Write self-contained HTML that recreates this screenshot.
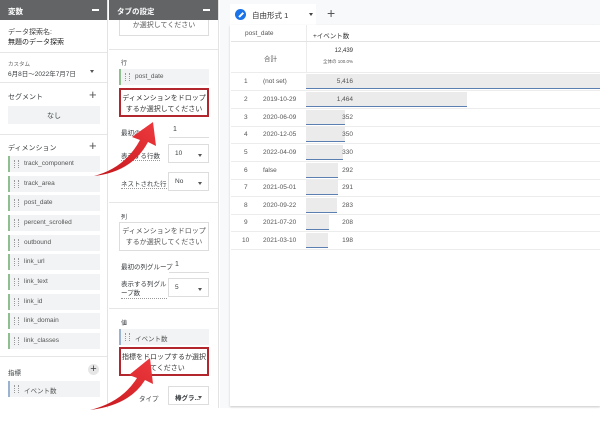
<!DOCTYPE html>
<html><head><meta charset="utf-8"><style>
*{box-sizing:border-box;margin:0;padding:0}
body{width:600px;height:422px;overflow:hidden;background:#fff;font-family:"Liberation Sans","Noto Sans CJK JP",sans-serif;color:#3c4043;position:relative;font-size:7px}
.a{position:absolute}
.hdr{background:#626466;color:#fff;height:20px;font-size:7.5px;padding:6px 8px;font-weight:bold}
.hdr .m{position:absolute;right:8px;top:9px;width:7px;height:1.5px;background:#fff}
.sep{position:absolute;left:0;right:0;height:1px;background:#e6e6e6}
.item{position:absolute;left:8px;width:92px;height:16px;background:#f1f3f4;border-left:2px solid #8fbf8f;font-size:6.5px;color:#555;padding:4px 0 0 14px}
.item:before{content:"";position:absolute;left:4px;top:4px;width:3px;height:8px;border-left:1px dotted #999;border-right:1px dotted #999}
.box{position:absolute;border:1px solid #ddd;background:#fff;text-align:center;font-size:7px;color:#555;line-height:11px}
.red{border:2px solid #b3262e}
.sel{position:absolute;border:1px solid #ddd;background:#fff;font-size:6.5px;padding:5px 0 0 6px}
.sel:after{content:"";position:absolute;right:6px;top:9px;border:2.5px solid transparent;border-top:3px solid #555}
.row{position:absolute;left:231px;width:369px;height:18px;border-bottom:1px solid #ececec;font-size:6.5px;color:#555}
.row .n{position:absolute;right:247px;top:5px}
.bar{position:absolute;left:306px;height:15px;background:#ebebeb;border-bottom:1.5px solid #5b7fb0}
</style></head><body>
<div class="a" style="left:0;top:0;width:108px;height:408px;background:#fff;border-right:1px solid #e3e3e3">
 <div class="hdr">変数<div class="m"></div></div>
 <div class="a" style="left:8px;top:28px;font-size:7px;line-height:10px;color:#444">データ探索名:<br><span style="color:#222">無題のデータ探索</span></div>
 <div class="sep" style="top:52px"></div>
 <div class="a" style="left:8px;top:60px;font-size:5.5px;color:#666">カスタム</div>
 <div class="a" style="left:8px;top:68px;font-size:6.5px">6月8日～2022年7月7日</div>
 <div class="a" style="left:90px;top:70px;border:2.5px solid transparent;border-top:3px solid #555"></div>
 <div class="sep" style="top:82px"></div>
 <div class="a" style="left:8px;top:92px;font-size:7px">セグメント</div>
 <div class="a" style="left:89px;top:87px;font-size:13px;color:#555">+</div>
 <div class="a" style="left:8px;top:106px;width:92px;height:18px;background:#f1f3f4;text-align:center;font-size:7px;padding-top:5px">なし</div>
 <div class="sep" style="top:134px"></div>
 <div class="a" style="left:8px;top:143px;font-size:7px">ディメンション</div>
 <div class="a" style="left:89px;top:138px;font-size:13px;color:#555">+</div>
 <div class="item" style="top:156px">track_component</div>
 <div class="item" style="top:176px">track_area</div>
 <div class="item" style="top:195px">post_date</div>
 <div class="item" style="top:215px">percent_scrolled</div>
 <div class="item" style="top:235px">outbound</div>
 <div class="item" style="top:254px">link_url</div>
 <div class="item" style="top:274px">link_text</div>
 <div class="item" style="top:294px">link_id</div>
 <div class="item" style="top:313px">link_domain</div>
 <div class="item" style="top:333px">link_classes</div>
 <div class="sep" style="top:356px"></div>
 <div class="a" style="left:8px;top:367px;font-size:6.5px">指標</div>
 <div class="a" style="left:88px;top:364px;width:11px;height:11px;border-radius:50%;background:#e6e6e6;font-size:11px;line-height:10px;text-align:center">+</div>
 <div class="item" style="top:381px;border-left-color:#9ab3cf">イベント数</div>
</div>
<div class="a" style="left:109px;top:0;width:110px;height:408px;background:#fff;border-right:1px solid #e3e3e3">
 <div class="hdr">タブの設定<div class="m"></div></div>
 <div class="box" style="left:10px;top:20px;width:90px;height:16px;border-top:none">か選択してください</div>
 <div class="sep" style="top:49px"></div>
 <div class="a" style="left:12px;top:58px;font-size:6px">行</div>
 <div class="item" style="left:10px;top:69px;width:90px">post_date</div>
 <div class="box red" style="left:10px;top:88px;width:90px;height:29px;padding-top:3px;color:#333">ディメンションをドロップ<br>するか選択してください</div>
 <div class="a" style="left:12px;top:127px;font-size:6.5px">最初の行</div>
 <div class="a" style="left:64px;top:126px;font-size:7px">1</div>
 <div class="a" style="left:60px;top:137px;width:40px;height:1px;background:#ddd"></div>
 <div class="a" style="left:12px;top:150px;font-size:6.5px;border-bottom:1px dotted #999">表示する行数</div>
 <div class="sel" style="left:59px;top:144px;width:41px;height:19px">10</div>
 <div class="a" style="left:12px;top:178px;font-size:6.5px;border-bottom:1px dotted #999">ネストされた行</div>
 <div class="sel" style="left:59px;top:172px;width:41px;height:19px">No</div>
 <div class="sep" style="top:202px"></div>
 <div class="a" style="left:12px;top:212px;font-size:6px">列</div>
 <div class="box" style="left:10px;top:222px;width:90px;height:29px;padding-top:3px">ディメンションをドロップ<br>するか選択してください</div>
 <div class="a" style="left:12px;top:261px;font-size:6.5px">最初の列グループ</div>
 <div class="a" style="left:66px;top:261px;font-size:7px">1</div>
 <div class="a" style="left:60px;top:272px;width:40px;height:1px;background:#ddd"></div>
 <div class="a" style="left:12px;top:280px;font-size:6.5px;line-height:9px;border-bottom:1px dotted #999">表示する列グル<br>ープ数</div>
 <div class="sel" style="left:59px;top:278px;width:41px;height:19px">5</div>
 <div class="sep" style="top:308px"></div>
 <div class="a" style="left:12px;top:318px;font-size:6px">値</div>
 <div class="item" style="left:10px;top:329px;width:90px;border-left-color:#9ab3cf">イベント数</div>
 <div class="box red" style="left:10px;top:347px;width:90px;height:29px;padding-top:3px;color:#333">指標をドロップするか選択<br>してください</div>
 <div class="a" style="left:30px;top:393px;font-size:6.5px">タイプ</div>
 <div class="sel" style="left:59px;top:386px;width:41px;height:19px;font-weight:bold">棒グラ...</div>
</div>
<div class="a" style="left:220px;top:0;width:380px;height:408px;background:#f8f9fa"></div>
<div class="a" style="left:230px;top:4px;width:86px;height:22px;background:#fff"></div>
<div class="a" style="left:235px;top:9px;width:11px;height:11px;border-radius:50%;background:#1a73e8"></div>
<div class="a" style="left:238px;top:14px;width:6px;height:1.5px;background:#fff;transform:rotate(-45deg)"></div>
<div class="a" style="left:252px;top:10px;font-size:7.5px;color:#333">自由形式 1</div>
<div class="a" style="left:309px;top:13px;border:2.5px solid transparent;border-top:3px solid #444"></div>
<div class="a" style="left:327px;top:5px;font-size:14px;color:#555">+</div>
<div class="a" style="left:230px;top:25px;width:370px;height:381px;background:#fff;box-shadow:0 1px 2px #ccc"></div>
<div class="a" style="left:306px;top:25px;width:1px;height:48px;background:#ececec"></div>
<div class="row" style="top:25px;height:17px;border-bottom:1px solid #e3e3e3"><span class="a" style="left:14px;top:5px">post_date</span><span class="a" style="left:82px;top:5px;color:#333">+イベント数</span></div>
<div class="row" style="top:42px;height:31px"><span class="a" style="left:33px;top:11px">合計</span><span class="a" style="right:247px;top:6px;font-size:6px;color:#333">12,439</span><span class="a" style="right:247px;top:17px;font-size:4.5px">全体の 100.0%</span></div>
<div class="bar" style="top:74px;width:294px"></div>
<div class="bar" style="top:92px;width:161px"></div>
<div class="bar" style="top:110px;width:39px"></div>
<div class="bar" style="top:127px;width:39px"></div>
<div class="bar" style="top:145px;width:37px"></div>
<div class="bar" style="top:163px;width:32px"></div>
<div class="bar" style="top:180px;width:32px"></div>
<div class="bar" style="top:198px;width:31px"></div>
<div class="bar" style="top:215px;width:23px"></div>
<div class="bar" style="top:233px;width:22px"></div>
<div class="row" style="top:73px"><span class="a" style="left:13px;top:5px">1</span><span class="a" style="left:32px;top:5px">(not set)</span><span class="n">5,416</span></div>
<div class="row" style="top:91px"><span class="a" style="left:13px;top:5px">2</span><span class="a" style="left:32px;top:5px">2019-10-29</span><span class="n">1,464</span></div>
<div class="row" style="top:109px"><span class="a" style="left:13px;top:5px">3</span><span class="a" style="left:32px;top:5px">2020-06-09</span><span class="n">352</span></div>
<div class="row" style="top:126px"><span class="a" style="left:13px;top:5px">4</span><span class="a" style="left:32px;top:5px">2020-12-05</span><span class="n">350</span></div>
<div class="row" style="top:144px"><span class="a" style="left:13px;top:5px">5</span><span class="a" style="left:32px;top:5px">2022-04-09</span><span class="n">330</span></div>
<div class="row" style="top:162px"><span class="a" style="left:13px;top:5px">6</span><span class="a" style="left:32px;top:5px">false</span><span class="n">292</span></div>
<div class="row" style="top:179px"><span class="a" style="left:13px;top:5px">7</span><span class="a" style="left:32px;top:5px">2021-05-01</span><span class="n">291</span></div>
<div class="row" style="top:197px"><span class="a" style="left:13px;top:5px">8</span><span class="a" style="left:32px;top:5px">2020-09-22</span><span class="n">283</span></div>
<div class="row" style="top:214px"><span class="a" style="left:13px;top:5px">9</span><span class="a" style="left:32px;top:5px">2021-07-20</span><span class="n">208</span></div>
<div class="row" style="top:232px"><span class="a" style="left:11px;top:5px">10</span><span class="a" style="left:32px;top:5px">2021-03-10</span><span class="n">198</span></div>
<svg class="a" style="left:0;top:0" width="600" height="422">
 <defs><linearGradient id="g" x1="0" y1="1" x2="1" y2="0"><stop offset="0" stop-color="#c4161c"/><stop offset="1" stop-color="#ee3a3f"/></linearGradient></defs>
 <path d="M94 176 Q125 168 140 140 L132 137 L153 122 L156 146 L148 142 Q132 172 94 176 Z" fill="url(#g)"/>
 <path d="M90 410 Q122 402 137 378 L129 375 L150 358 L153 384 L145 380 Q130 405 90 410 Z" fill="url(#g)"/>
</svg>
</body></html>
